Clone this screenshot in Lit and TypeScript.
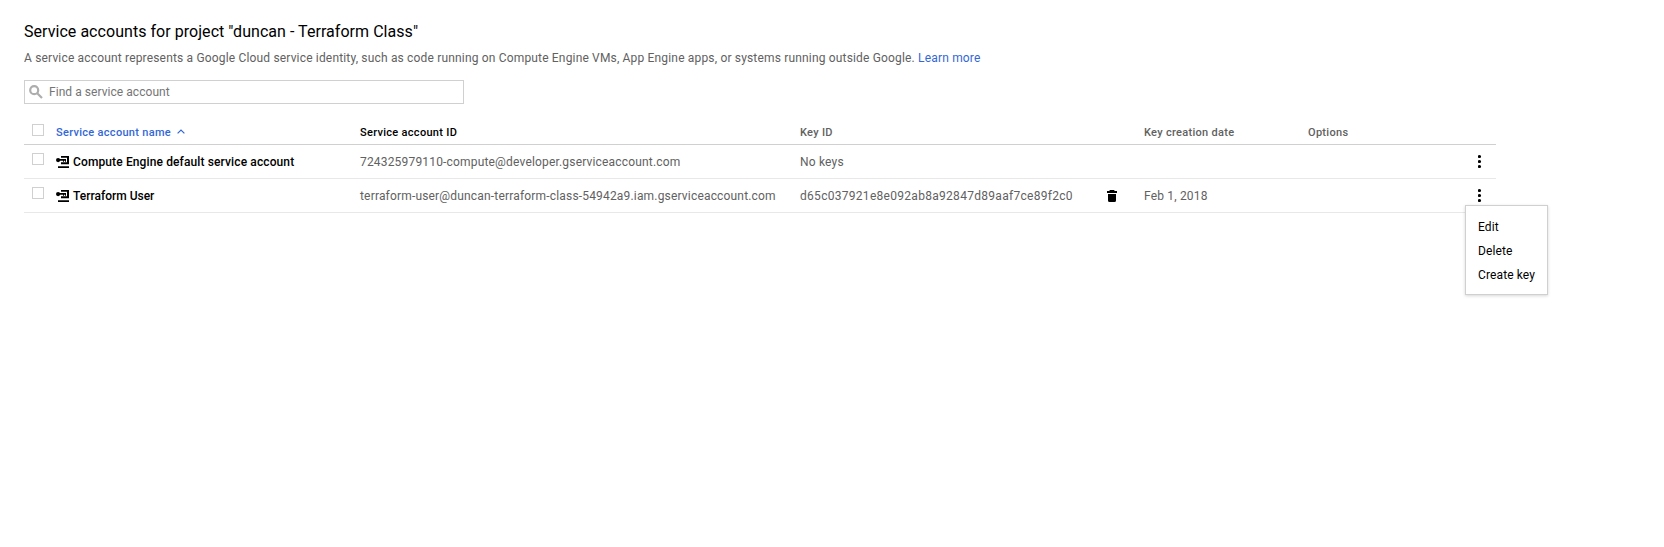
import { LitElement, html, css, svg, nothing } from "lit";
import { customElement, state } from "lit/decorators.js";

interface Account {
  name: string;
  id: string;
  key: string;
  created: string;
}

const ACCOUNTS: Account[] = [
  {
    name: "Compute Engine default service account",
    id: "724325979110-compute@developer.gserviceaccount.com",
    key: "",
    created: "",
  },
  {
    name: "Terraform User",
    id: "terraform-user@duncan-terraform-class-54942a9.iam.gserviceaccount.com",
    key: "d65c037921e8e092ab8a92847d89aaf7ce89f2c0",
    created: "Feb 1, 2018",
  },
];

const accountIcon = html`<svg class="account-icon" width="13" height="13" viewBox="0 -1 13 13" aria-hidden="true">
  ${svg`<path d="M5 0h8v8.300H5v-2h6V1.700H5z"/><circle cx="2.100" cy="4.100" r="2.100"/><path d="M3 3h7v2.700H9V4.700H8v1H7v-1H3zM2 10.200h11V12H2z"/>`}
</svg>`;

const trashIcon = html`<svg width="10" height="13" viewBox="0 -1 10 13" aria-hidden="true">
  <path d="M3 0h4l.8 1H10v2H0V1h2.200zM1 4h8v6.500a1.500 1.500 0 0 1-1.500 1.500h-5A1.500 1.500 0 0 1 1 10.500z" />
</svg>`;

const dotsIcon = html`<svg width="4" height="15" viewBox="0 0 4 15" aria-hidden="true">
  <circle cx="1.500" cy="2.500" r="1.600" /><circle cx="1.500" cy="7.500" r="1.600" /><circle cx="1.500" cy="12.500" r="1.600" />
</svg>`;

@customElement("app-root")
export class AppRoot extends LitElement {
  @state() private openRow = 1;

  static styles = css`
    :host {
      display: block;
      box-sizing: border-box;
      min-height: 547px;
      padding: 22px 168px 0 24px;
      background: #fff;
      color: #000;
      font: 12px/18px Roboto, sans-serif;
    }
    *, *::before { box-sizing: border-box; }
    h1 { margin: 0; font-size: 16px; line-height: 20px; font-weight: 400; letter-spacing: 0.045px; }
    .intro { margin: 7px 0 13px; color: #616161; letter-spacing: 0.17px; }
    .link { color: #3367d6; text-decoration: none; }
    .search {
      display: flex;
      align-items: center;
      width: 440px;
      height: 24px;
      padding-left: 4px;
      border: 1px solid #d0d0d0;
      gap: 6px;
      color: #757575;
      letter-spacing: 0.05px;
    }
    .search svg { flex: none; }
    .row {
      display: grid;
      grid-template-columns: 32px 304px 440px 304px 40px 164px 1fr;
      align-items: center;
      height: 34px;
      border-bottom: 1px solid #e8e8e8;
      color: #616161;
      letter-spacing: 0.178px;
      white-space: nowrap;
    }
    .head {
      height: 27px;
      margin-top: 14px;
      border-bottom-color: #d0d0d0;
      padding-top: 3px;
      font-size: 11px;
      font-weight: 500;
      letter-spacing: 0.3px;
    }
    .check {
      width: 12px;
      height: 12px;
      margin: 0 0 5px 8px;
      border: 1px solid #d0d0d0;
      background: #fff;
    }
    .head .check { margin-bottom: 6px; }
    .sorted { display: flex; align-items: center; gap: 6px; color: #3367d6; }
    .sorted svg { margin-bottom: 2px; }
    .strong { color: #000; }
    .name { display: flex; align-items: center; gap: 4px; color: #000; font-weight: 500; letter-spacing: 0.12px; }
    .short { letter-spacing: 0; }
    .key { letter-spacing: 0.29px; }
    .account-icon { flex: none; }
    .trash { display: flex; padding-left: 3px; }
    .more { position: relative; justify-self: end; display: flex; margin-right: 14px; }
    .menu {
      position: absolute;
      top: 17px;
      left: -13px;
      width: 83px;
      height: 90px;
      padding: 9px 12px;
      border: 1px solid #d0d0d0;
      background: #fff;
      box-shadow: 0 1px 3px rgba(0, 0, 0, 0.16);
      color: #000;
      letter-spacing: 0.12px;
    }
    .item { height: 24px; line-height: 24px; }
  `;

  private renderRow(a: Account, i: number) {
    return html`<div class="row">
      <span class="check"></span>
      <span class="name">${accountIcon}<span class=${a.name.length < 20 ? "short" : ""}>${a.name}</span></span>
      <span>${a.id}</span>
      <span class=${a.key ? "key" : ""}>${a.key || "No keys"}</span>
      <span class="trash">${a.key ? trashIcon : nothing}</span>
      <span>${a.created}</span>
      <span class="more" @click=${() => (this.openRow = this.openRow === i ? -1 : i)}>
        ${dotsIcon}
        ${this.openRow === i
          ? html`<div class="menu">
              ${["Edit", "Delete", "Create key"].map((t) => html`<div class="item">${t}</div>`)}
            </div>`
          : nothing}
      </span>
    </div>`;
  }

  render() {
    return html`
      <h1>Service accounts for project "duncan - Terraform Class"</h1>
      <p class="intro">
        A service account represents a Google Cloud service identity, such as code running on Compute Engine VMs, App Engine apps, or systems running outside Google.
        <a class="link">Learn more</a>
      </p>
      <div class="search">
        <svg width="14" height="14" viewBox="0 0 14 14" fill="none" stroke="#adadad" stroke-width="2.200">
          <circle cx="5.200" cy="5.200" r="4" /><path d="M8 8l5 5" />
        </svg>
        <span>Find a service account</span>
      </div>
      <div class="row head">
        <span class="check"></span>
        <span class="sorted">Service account name
          <svg width="8" height="5" viewBox="0 0 8 5" fill="none" stroke="#3367d6" stroke-width="1.200"><path d="M.6 4.400L4 1l3.400 3.400" /></svg>
        </span>
        <span class="strong">Service account ID</span>
        <span>Key ID</span>
        <span></span>
        <span>Key creation date</span>
        <span>Options</span>
      </div>
      ${ACCOUNTS.map((a, i) => this.renderRow(a, i))}
    `;
  }
}
